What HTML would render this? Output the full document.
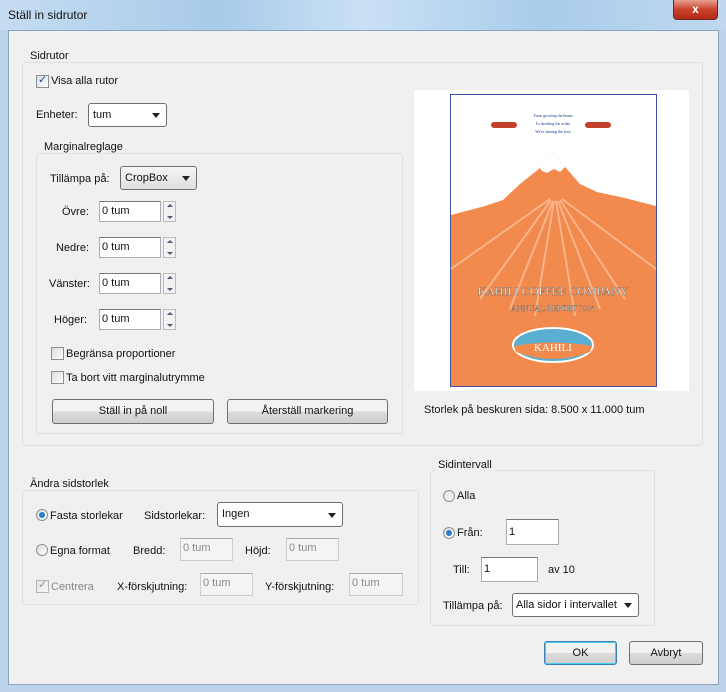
<!DOCTYPE html>
<html><head><meta charset="utf-8"><style>
*{box-sizing:border-box;margin:0;padding:0}
body{width:726px;height:692px;overflow:hidden;background:#bcd3ea;font-family:"Liberation Sans",sans-serif;font-size:11px;color:#111;position:relative}
.a{position:absolute}
.t{position:absolute;white-space:nowrap;line-height:12px}
.grp{position:absolute;border:1px solid #dcdfe3;border-radius:3px}
.gl{position:absolute;background:#f0f0f0;padding:0 2px;white-space:nowrap;line-height:12px}
.inp{position:absolute;background:#fff;border:1px solid #abadb3;border-top-color:#777;padding-left:2px;line-height:18px;white-space:nowrap}
.dis{background:#f4f4f4;color:#888;border-color:#ccc;border-top-color:#aaa}
.sel{position:absolute;background:linear-gradient(#f6f6f6,#e0e0e0);border:1px solid #707070;border-radius:3px;padding-left:4px;white-space:nowrap}
.sel.w{background:#fff}
.sel:after{content:"";position:absolute;right:6px;top:50%;margin-top:-2px;border:4px solid transparent;border-top:5px solid #222;border-bottom:none}
.btn{position:absolute;background:linear-gradient(#f2f2f2 50%,#dcdcdc 50%,#cfcfcf);border:1px solid #707070;border-radius:3px;text-align:center}
.cb{position:absolute;width:13px;height:13px;border:1px solid #8e8f8f;background:linear-gradient(135deg,#dcdcdc,#fff)}
.rb{position:absolute;width:12px;height:12px;border:1px solid #8e8f8f;border-radius:50%;background:linear-gradient(135deg,#ddd,#fff)}
.rb.on:after{content:"";position:absolute;left:2px;top:2px;width:6px;height:6px;border-radius:50%;background:#2a7ec8}
.sp{position:absolute;width:13px;height:21px;border:1px solid #bbb;background:#f2f2f2}
.sp:before,.sp:after{content:"";position:absolute;left:3px;border:3px solid transparent}
.sp:before{top:2px;border-bottom:3px solid #4a5a80;border-top:none}
.sp:after{bottom:2px;border-top:3px solid #4a5a80;border-bottom:none}
</style></head><body>
<div class="a" style="left:0;top:0;width:726px;height:30px;background:linear-gradient(90deg,#c5dcf2,#a8cbea 30%,#c9e0f4 50%,#a9cdec 75%,#c0d8ef)"></div>
<div class="t" style="left:8px;top:9px;font-size:12px">Ställ in sidrutor</div>
<div class="a" style="left:673px;top:0;width:45px;height:20px;background:linear-gradient(#e8a090,#c8432c 50%,#b52a14);border:1px solid #6b2a20;border-top:none;border-radius:0 0 4px 4px;color:#fff;text-align:center;font-weight:bold;font-size:12px;line-height:18px">x</div>
<div class="a" style="left:8px;top:30px;width:711px;height:655px;background:#f0f0f0;border:1px solid #8ba4c0"></div>

<div class="grp" style="left:22px;top:62px;width:681px;height:384px"></div>
<div class="gl" style="left:28px;top:50px">Sidrutor</div>
<div class="cb" style="left:36px;top:75px"></div><div class="t" style="left:38px;top:74px;color:#1a4fa0;font-size:11px">✓</div>
<div class="t" style="left:51px;top:75px">Visa alla rutor</div>
<div class="t" style="left:36px;top:109px">Enheter:</div>
<div class="sel w" style="left:88px;top:103px;width:79px;height:24px;line-height:22px">tum</div>

<div class="grp" style="left:36px;top:153px;width:367px;height:281px"></div>
<div class="gl" style="left:42px;top:141px">Marginalreglage</div>
<div class="t" style="left:50px;top:173px">Tillämpa på:</div>
<div class="sel" style="left:120px;top:166px;width:77px;height:24px;line-height:22px">CropBox</div>
<div class="t" style="left:62px;top:206px">Övre:</div>
<div class="inp" style="left:99px;top:201px;width:62px;height:21px">0 tum</div><div class="sp" style="left:163px;top:201px"></div>
<div class="t" style="left:56px;top:242px">Nedre:</div>
<div class="inp" style="left:99px;top:237px;width:62px;height:21px">0 tum</div><div class="sp" style="left:163px;top:237px"></div>
<div class="t" style="left:49px;top:278px">Vänster:</div>
<div class="inp" style="left:99px;top:273px;width:62px;height:21px">0 tum</div><div class="sp" style="left:163px;top:273px"></div>
<div class="t" style="left:54px;top:314px">Höger:</div>
<div class="inp" style="left:99px;top:309px;width:62px;height:21px">0 tum</div><div class="sp" style="left:163px;top:309px"></div>
<div class="cb" style="left:51px;top:347px"></div><div class="t" style="left:66px;top:348px">Begränsa proportioner</div>
<div class="cb" style="left:51px;top:371px"></div><div class="t" style="left:66px;top:372px">Ta bort vitt marginalutrymme</div>
<div class="btn" style="left:52px;top:399px;width:162px;height:25px;line-height:23px">Ställ in på noll</div>
<div class="btn" style="left:227px;top:399px;width:161px;height:25px;line-height:23px">Återställ markering</div>

<div class="a" style="left:414px;top:90px;width:275px;height:301px;background:#fff"></div>
<svg class="a" style="left:450px;top:94px" width="207" height="293" viewBox="0 0 207 293">
<rect x="0.5" y="0.5" width="206" height="292" fill="#fff" stroke="#3d4ea8"/>
<text x="103" y="23" font-size="4" text-anchor="middle" fill="#1b3a8a" font-family="Liberation Serif">From growing the beans</text>
<text x="103" y="31" font-size="4" text-anchor="middle" fill="#1b3a8a" font-family="Liberation Serif">To deciding the order,</text>
<text x="103" y="39" font-size="4" text-anchor="middle" fill="#1b3a8a" font-family="Liberation Serif">We're sharing the love</text>
<rect x="41" y="28" width="26" height="6" fill="#c3402b" rx="3"/><rect x="135" y="28" width="26" height="6" fill="#c3402b" rx="3"/>
<path d="M1 121 L35 112 L53 106 L70 90 L90 74 L102 59 L115 73 L130 90 L147 98 L175 104 L206 112 L206 292 L1 292Z" fill="#f28a4e"/>
<path d="M90 74 L102 59 L115 73 L110 78 L104 75 L97 79 L92 77Z" fill="#fff"/>
<path d="M1 175 L100 105 M30 205 L101 106 M60 215 L103 107 M85 222 L104 107 M125 222 L106 107 M150 215 L108 107 M175 205 L110 106 M206 175 L112 105" stroke="#f9b48a" stroke-width="2"/>
<text x="103" y="201" font-size="12" text-anchor="middle" fill="#fff" stroke="#555" stroke-width="0.3" font-family="Liberation Serif">KAHILI COFFEE COMPANY</text>
<text x="103" y="217" font-size="8" text-anchor="middle" fill="#fff" stroke="#555" stroke-width="0.3" font-family="Liberation Serif">ANNUAL REPORT 2004</text>
<ellipse cx="103" cy="251" rx="40" ry="17" fill="#5aaed0" stroke="#fff" stroke-width="2"/>
<path d="M64 252 Q103 245 142 252 L140 258 Q103 272 66 258Z" fill="#f28a4e"/>
<text x="103" y="257" font-size="11" text-anchor="middle" fill="#fff" font-family="Liberation Serif">KAHILI</text>
</svg>
<div class="t" style="left:424px;top:404px">Storlek på beskuren sida: 8.500 x 11.000 tum</div>

<div class="grp" style="left:22px;top:490px;width:397px;height:115px"></div>
<div class="gl" style="left:28px;top:478px">Ändra sidstorlek</div>
<div class="rb on" style="left:36px;top:509px"></div><div class="t" style="left:50px;top:510px">Fasta storlekar</div>
<div class="t" style="left:144px;top:510px">Sidstorlekar:</div>
<div class="sel w" style="left:217px;top:502px;width:126px;height:25px;line-height:23px">Ingen</div>
<div class="rb" style="left:36px;top:544px"></div><div class="t" style="left:50px;top:545px">Egna format</div>
<div class="t" style="left:133px;top:545px">Bredd:</div>
<div class="inp dis" style="left:180px;top:538px;width:53px;height:23px">0 tum</div>
<div class="t" style="left:245px;top:545px">Höjd:</div>
<div class="inp dis" style="left:286px;top:538px;width:53px;height:23px">0 tum</div>
<div class="cb" style="left:36px;top:580px;opacity:.6"></div><div class="t" style="left:38px;top:579px;color:#999">✓</div>
<div class="t" style="left:51px;top:581px;color:#888">Centrera</div>
<div class="t" style="left:117px;top:581px">X-förskjutning:</div>
<div class="inp dis" style="left:200px;top:573px;width:53px;height:23px">0 tum</div>
<div class="t" style="left:265px;top:581px">Y-förskjutning:</div>
<div class="inp dis" style="left:349px;top:573px;width:54px;height:23px">0 tum</div>

<div class="grp" style="left:430px;top:470px;width:225px;height:156px"></div>
<div class="gl" style="left:436px;top:459px">Sidintervall</div>
<div class="rb" style="left:443px;top:490px"></div><div class="t" style="left:457px;top:490px">Alla</div>
<div class="rb on" style="left:443px;top:527px"></div><div class="t" style="left:457px;top:527px">Från:</div>
<div class="inp" style="left:506px;top:519px;width:53px;height:26px;line-height:24px">1</div>
<div class="t" style="left:453px;top:564px">Till:</div>
<div class="inp" style="left:481px;top:557px;width:57px;height:25px;line-height:23px">1</div>
<div class="t" style="left:548px;top:564px">av 10</div>
<div class="t" style="left:443px;top:600px">Tillämpa på:</div>
<div class="sel w" style="left:512px;top:593px;width:127px;height:24px;line-height:22px;padding-left:3px">Alla sidor i intervallet</div>

<div class="btn" style="left:544px;top:641px;width:73px;height:24px;line-height:22px;border-color:#3c7fb1;box-shadow:inset 0 0 0 1px #48d0f0">OK</div>
<div class="btn" style="left:629px;top:641px;width:74px;height:24px;line-height:22px">Avbryt</div>
</body></html>
